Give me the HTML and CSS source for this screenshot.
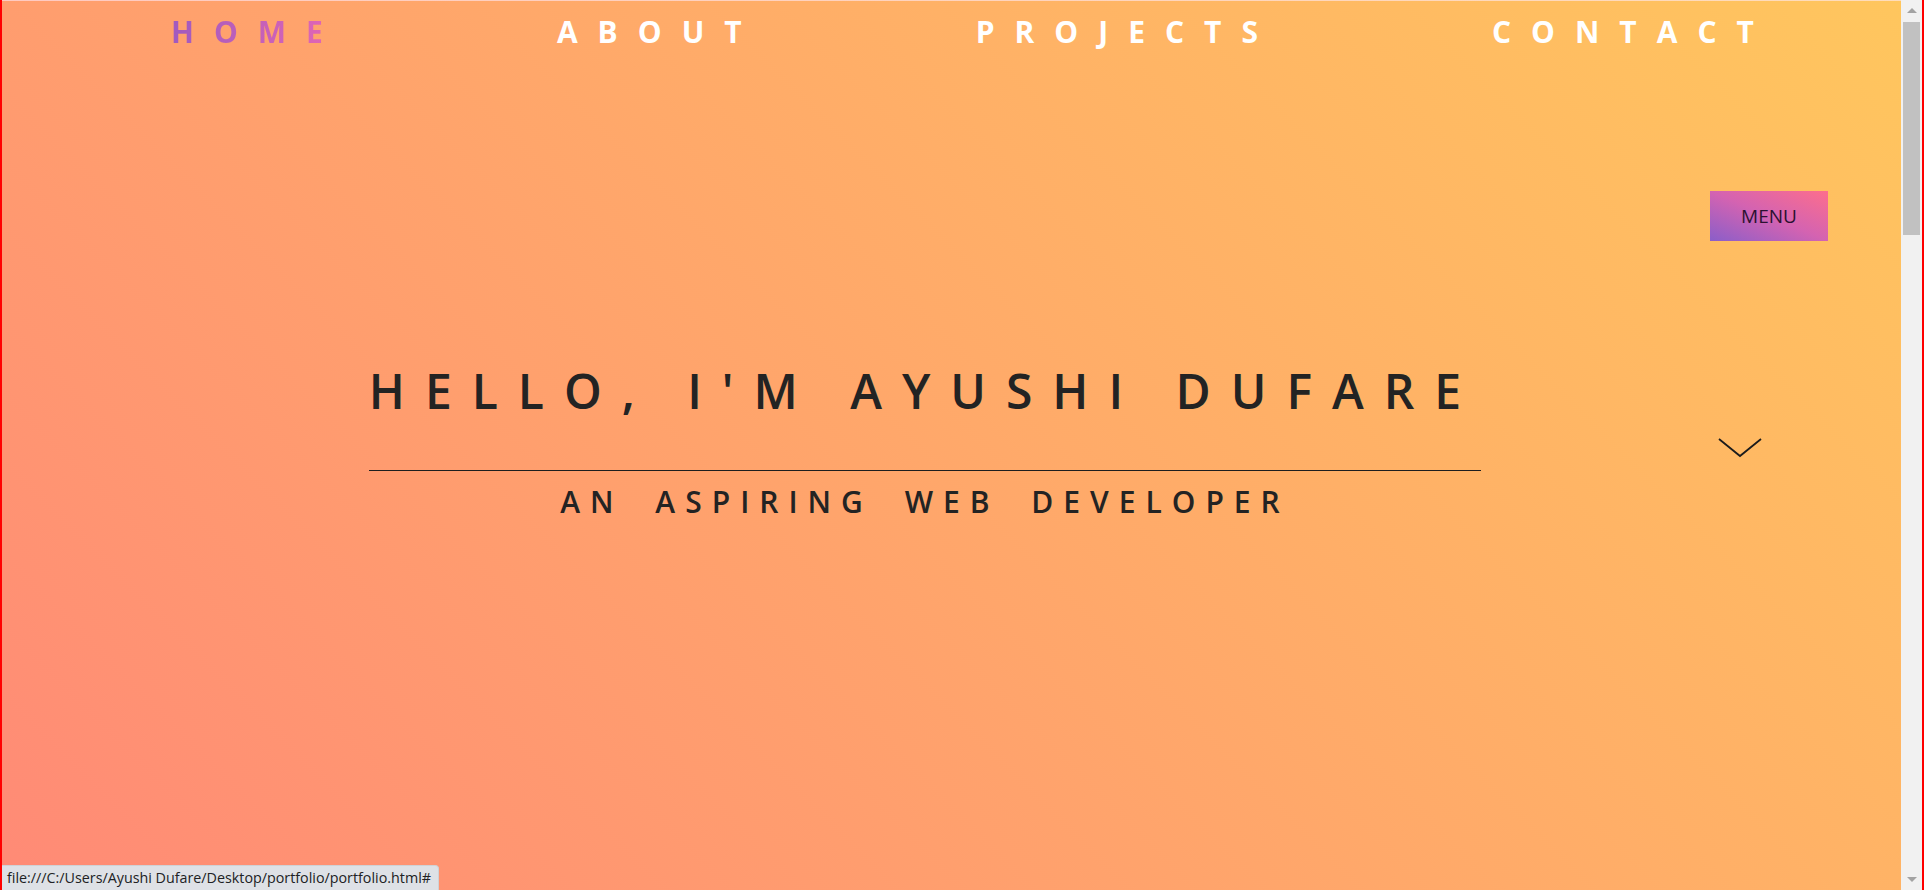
FILE: index.html
```html
<!DOCTYPE html>
<html lang="en">
<head>
<meta charset="utf-8">
<title>Portfolio</title>
<link rel="stylesheet" href="styles.css">
</head>
<body>
<div class="window">
  <div class="edge edge-left"></div>
  <div class="viewport">
    <nav class="nav">
      <a class="nav-link active" href="#">HOME</a>
      <a class="nav-link" href="#">ABOUT</a>
      <a class="nav-link" href="#">PROJECTS</a>
      <a class="nav-link" href="#">CONTACT</a>
    </nav>
    <section class="hero">
      <h1 class="hero-title">HELLO, I'M AYUSHI DUFARE</h1>
      <p class="hero-sub">AN ASPIRING WEB DEVELOPER</p>
    </section>
    <button class="menu-btn">MENU</button>
    <svg class="chevron" width="46" height="22" viewBox="0 0 46 22"><polyline points="2,2 23,19 44,2" fill="none" stroke="#1c1c1c" stroke-width="1.8"/></svg>
    <div class="status">file:///C:/Users/Ayushi Dufare/Desktop/portfolio/portfolio.html#</div>
  </div>
  <div class="scrollbar">
    <div class="sb-btn"><span class="tri tri-up"></span></div>
    <div class="sb-track"><div class="sb-thumb"></div></div>
    <div class="sb-btn"><span class="tri tri-down"></span></div>
  </div>
  <div class="edge edge-right"></div>
</div>
</body>
</html>
```
FILE: styles.css
```css
* { box-sizing: border-box; }
html, body { margin: 0; padding: 0; height: 100%; overflow: hidden; }
body { font-family: "Open Sans", "Noto Sans", sans-serif; }

.window { display: flex; width: 1924px; height: 890px; }
.edge { width: 2px; background: #ff0000; flex: none; }

.viewport {
  position: relative;
  flex: 1;
  height: 890px;
  background: linear-gradient(45deg, #ff8a76 0%, #ffc65e 100%);
  border-top: 1px solid rgba(255, 255, 255, 0.55);
  overflow: hidden;
}

.nav {
  display: flex;
  gap: 214px;
  padding: 11px 0 0 169px;
  height: 51px;
}
.nav-link {
  font-size: 30px;
  line-height: 40px;
  font-weight: 700;
  letter-spacing: 20px;
  color: #ffffff;
  text-decoration: none;
}
.nav-link.active {
  background: linear-gradient(90deg, #a05abf, #e766b3);
  -webkit-background-clip: text;
  background-clip: text;
  color: transparent;
}

.hero {
  display: flex;
  flex-direction: column;
  align-items: center;
  padding: 310px 53px 0 0;
}
.hero-title {
  margin: 0;
  font-size: 48px;
  line-height: 58px;
  font-weight: 600;
  letter-spacing: 20px;
  color: #232323;
  padding-bottom: 50px;
  border-bottom: 1px solid #1e1e1e;
}
.hero-sub {
  margin: 13px 0 0;
  font-size: 30px;
  line-height: 36px;
  font-weight: 600;
  letter-spacing: 10px;
  word-spacing: 14px;
  color: #232323;
}

.menu-btn {
  position: absolute;
  right: 73px;
  top: 190px;
  width: 118px;
  height: 50px;
  border: none;
  padding: 0;
  background: linear-gradient(to top right, #8a5ec9 0%, #d463b1 50%, #fd6e8c 100%);
  font-family: "Open Sans", sans-serif;
  font-size: 19px;
  color: #2b1131;
  cursor: pointer;
}

.chevron { position: absolute; right: 138px; top: 436px; }

.status {
  position: absolute;
  left: 0;
  bottom: 0;
  width: 437px;
  height: 25px;
  padding: 0 0 0 5px;
  background: #dee1e6;
  border-top: 1px solid #cfd2d6;
  border-right: 1px solid #cfd2d6;
  border-top-right-radius: 4px;
  font-size: 14.3px;
  line-height: 24px;
  color: #202124;
  white-space: nowrap;
}

.scrollbar {
  flex: none;
  width: 21px;
  height: 890px;
  background: #f1f1f1;
  display: flex;
  flex-direction: column;
}
.sb-btn { height: 21px; flex: none; display: flex; align-items: center; justify-content: center; }
.sb-track { flex: 1; padding: 1px 2px 0; }
.sb-thumb { height: 213px; background: #c1c1c1; }
.tri { width: 0; height: 0; border-left: 5px solid transparent; border-right: 5px solid transparent; }
.tri-up { border-bottom: 5px solid #a3a3a3; }
.tri-down { border-top: 5px solid #a3a3a3; }
```
